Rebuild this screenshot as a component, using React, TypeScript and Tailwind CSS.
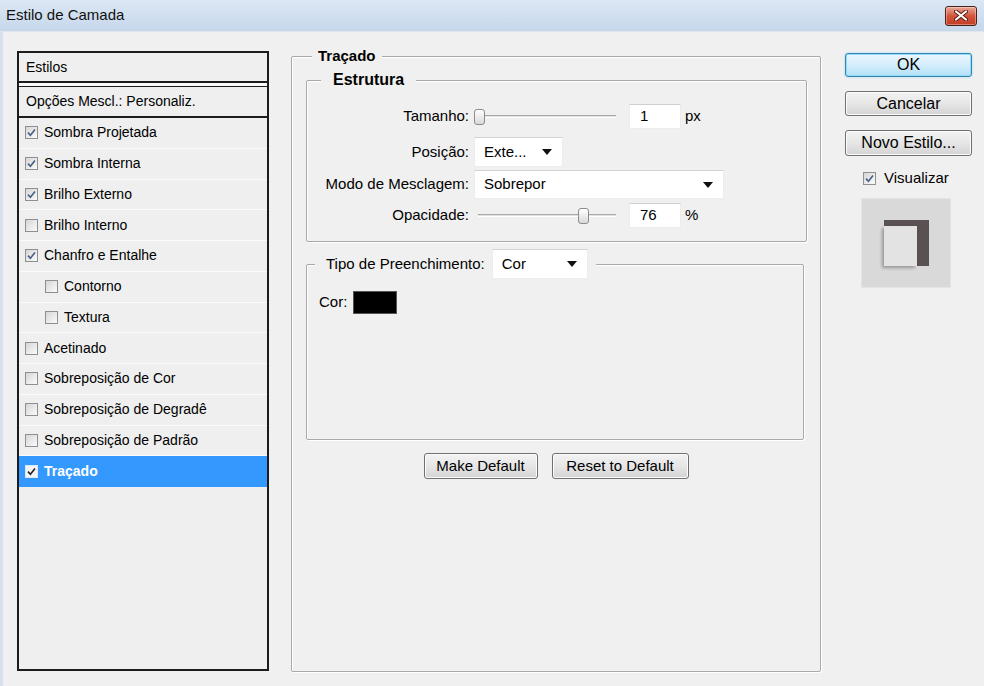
import React from 'react';

type StyleItem = { label: string; checked?: boolean; sub?: boolean; active?: boolean };

const styles: StyleItem[] = [
  { label: 'Sombra Projetada', checked: true },
  { label: 'Sombra Interna', checked: true },
  { label: 'Brilho Externo', checked: true },
  { label: 'Brilho Interno' },
  { label: 'Chanfro e Entalhe', checked: true },
  { label: 'Contorno', sub: true },
  { label: 'Textura', sub: true },
  { label: 'Acetinado' },
  { label: 'Sobreposição de Cor' },
  { label: 'Sobreposição de Degradê' },
  { label: 'Sobreposição de Padrão' },
  { label: 'Traçado', checked: true, active: true },
];

const CheckBox: React.FC<{ checked?: boolean; active?: boolean }> = ({ checked, active }) => (
  <span
    className={
      active
        ? 'w-[13px] h-[13px] border border-[#d8e6f5] bg-[#f4f4f4] flex items-center justify-center shrink-0'
        : 'w-[13px] h-[13px] border border-[#8e8f8f] bg-gradient-to-br from-[#d6d6d6] to-[#fbfbfb] flex items-center justify-center shrink-0'
    }
  >
    {checked && (
      <svg width="9" height="9" viewBox="0 0 9 9">
        <path d="M1 4.6 L3.4 7.2 L8 1.4" fill="none" stroke={active ? '#222' : '#4a5f86'} strokeWidth="1.6" />
      </svg>
    )}
  </span>
);

const Caret = () => (
  <svg width="10" height="6" viewBox="0 0 10 6" className="shrink-0">
    <path d="M0 0 H10 L5 6 Z" fill="#111" />
  </svg>
);

const Select: React.FC<{ value: string; className: string }> = ({ value, className }) => (
  <div className={`bg-white border border-[#ececec] border-t-[#d2d2d2] flex items-center justify-between pl-[9px] pr-[10px] text-[15px] ${className}`}>
    <span>{value}</span>
    <Caret />
  </div>
);

const NumInput: React.FC<{ value: string }> = ({ value }) => (
  <div className="ml-[10px] w-[52px] h-[25px] bg-white border border-[#ececec] border-t-[#cfcfcf] flex items-center pl-[10px] text-[15px]">
    {value}
  </div>
);

const Slider: React.FC<{ thumb: string }> = ({ thumb }) => (
  <div className="relative ml-[5px] w-[145px] h-[25px] flex items-center pl-[4px] pr-[3px]">
    <div className="w-full h-[3px] border-t border-[#a8a8a8] border-b border-b-white bg-[#e2e2e2]" />
    <div className={`absolute top-[5px] w-[11px] h-[16px] rounded-[3px] border border-[#8c8c8c] bg-gradient-to-b from-white to-[#d9d9d9] ${thumb}`} />
  </div>
);

const WinButton: React.FC<{ children: React.ReactNode; className?: string }> = ({ children, className }) => (
  <div
    className={`rounded-[3px] border border-[#707070] bg-gradient-to-b from-[#f3f3f3] via-[#e6e6e6] to-[#d4d4d4] shadow-[inset_0_0_0_1px_#fcfcfc] flex items-center justify-center ${className ?? ''}`}
  >
    {children}
  </div>
);

export default function App() {
  return (
    <div className="w-[984px] h-[686px] bg-[#f0f0f0] text-black overflow-hidden flex flex-col font-['Liberation_Sans',Arial,sans-serif]">
      {/* title bar */}
      <div className="h-[32px] shrink-0 flex items-center justify-between pl-[6px] pr-[7px] bg-gradient-to-b from-[#dce7f4] to-[#c6d7eb] border-b border-[#dfe6ee]">
        <span className="text-[15px] text-[#111]">Estilo de Camada</span>
        <div className="w-[32px] h-[20px] rounded-[3px] border border-[#4b2019] bg-gradient-to-b from-[#e9a99a] via-[#d3533b] to-[#c23d22] flex items-center justify-center shadow-[inset_0_0_0_1px_rgba(255,255,255,0.35)]">
          <svg width="14" height="11" viewBox="0 0 14 11">
            <path d="M2 1.5 L12 9.5 M12 1.5 L2 9.5" stroke="#5a1a10" strokeWidth="4" strokeLinecap="round" />
            <path d="M2 1.5 L12 9.5 M12 1.5 L2 9.5" stroke="#ffffff" strokeWidth="2.2" strokeLinecap="round" />
          </svg>
        </div>
      </div>

      <div className="flex flex-1 pt-[15px] pl-[17px] border-l-[3px] border-[#d5e1ee]">
        {/* left panel */}
        <div className="mt-[4px] -ml-[3px] w-[252px] h-[620px] border-2 border-[#1c1c1c] bg-[#efefef] flex flex-col text-[14px]">
          <div className="h-[30px] border-b-2 border-[#1c1c1c] flex items-center pl-[7px]">Estilos</div>
          <div className="h-[3px] bg-[#fafafa]" />
          <div className="h-[32px] border-t border-b-2 border-[#1c1c1c] flex items-center pl-[7px]">Opções Mescl.: Personaliz.</div>
          {styles.map(s => (
            <div
              key={s.label}
              className={
                s.active
                  ? 'h-[30.75px] flex items-center gap-[6px] pl-[6px] bg-[#3399ff] text-white font-bold'
                  : s.sub
                    ? 'h-[30.75px] flex items-center gap-[6px] pl-[26px] border-b border-[#fbfbfb]'
                    : 'h-[30.75px] flex items-center gap-[6px] pl-[6px] border-b border-[#fbfbfb]'
              }
            >
              <CheckBox checked={s.checked} active={s.active} />
              <span>{s.label}</span>
            </div>
          ))}
        </div>

        {/* middle: Traçado */}
        <fieldset className="ml-[22px] w-[530px] h-[625px] border border-[#a9a9a9] rounded-[2px] shadow-[inset_1px_1px_0_#ffffff,1px_1px_0_#ffffff] p-0 flex flex-col">
          <legend className="ml-[20px] px-[6px] text-[15px] font-bold leading-[18px] bg-[#f0f0f0]">Traçado</legend>

          <fieldset className="mt-[5px] ml-[14px] w-[501px] border border-[#a9a9a9] rounded-[2px] shadow-[inset_1px_1px_0_#ffffff,1px_1px_0_#ffffff] pt-[14px] pb-[13px] text-[15px]">
            <legend className="ml-[14px] px-[12px] text-[16px] font-bold leading-[20px] bg-[#f0f0f0]">Estrutura</legend>
            <div className="flex flex-col">
              <div className="h-[25px] flex items-center">
                <span className="w-[162px] text-right">Tamanho:</span>
                <Slider thumb="left-[0px]" />
                <NumInput value="1" />
                <span className="ml-[4px]">px</span>
              </div>
              <div className="mt-[8px] h-[30px] flex items-center">
                <span className="w-[162px] text-right">Posição:</span>
                <Select value="Exte..." className="ml-[5px] w-[89px] h-[30px]" />
              </div>
              <div className="mt-[3px] h-[29px] flex items-center">
                <span className="w-[162px] text-right">Modo de Mesclagem:</span>
                <Select value="Sobrepor" className="ml-[5px] w-[250px] h-[29px]" />
              </div>
              <div className="mt-[4px] h-[25px] flex items-center">
                <span className="w-[162px] text-right">Opacidade:</span>
                <Slider thumb="left-[104px]" />
                <NumInput value="76" />
                <span className="ml-[4px]">%</span>
              </div>
            </div>
          </fieldset>

          <fieldset className="mt-[7px] ml-[14px] w-[498px] h-[191px] border border-[#a9a9a9] rounded-[2px] shadow-[inset_1px_1px_0_#ffffff,1px_1px_0_#ffffff] p-0 text-[15px]">
            <legend className="ml-[8px] pl-[11px] pr-[8px] bg-[#f0f0f0]">
              <div className="flex items-center gap-[7px]">
                <span>Tipo de Preenchimento:</span>
                <Select value="Cor" className="w-[96px] h-[30px]" />
              </div>
            </legend>
            <div className="mt-[12px] ml-[12px] flex items-center">
              <span>Cor:</span>
              <div className="ml-[6px] w-[44px] h-[23px] bg-black border border-[#555]" />
            </div>
          </fieldset>

          <div className="mt-[13px] flex justify-center gap-[14px] text-[15px]">
            <WinButton className="w-[114px] h-[26px]">Make Default</WinButton>
            <WinButton className="w-[137px] h-[26px]">Reset to Default</WinButton>
          </div>
        </fieldset>

        {/* right column */}
        <div className="mt-[6px] ml-[24px] w-[127px] flex flex-col text-[16px]">
          <div className="h-[24px] rounded-[3px] border border-[#3c7fb1] bg-gradient-to-b from-[#e9f6fd] via-[#d5eefc] to-[#b2dff6] shadow-[inset_0_0_0_1px_#8fe0f7,0_0_2px_#7fd4f3] flex items-center justify-center">
            OK
          </div>
          <WinButton className="mt-[14px] h-[25px]">Cancelar</WinButton>
          <WinButton className="mt-[14px] h-[26px]">Novo Estilo...</WinButton>
          <div className="mt-[11px] ml-[18px] flex items-center gap-[8px] text-[15px]">
            <CheckBox checked />
            <span>Visualizar</span>
          </div>
          <div className="mt-[8px] ml-[16px] w-[90px] h-[90px] bg-[#d9d9d9] border border-[#e4e4e4] flex items-center justify-center">
            <div className="w-[45px] h-[46px] bg-[#5a5252] pt-[6px] pr-[12px]">
              <div className="w-full h-full bg-[#e3e3e3] shadow-[-2px_2px_3px_rgba(0,0,0,0.3)]" />
            </div>
          </div>
        </div>
      </div>
    </div>
  );
}
